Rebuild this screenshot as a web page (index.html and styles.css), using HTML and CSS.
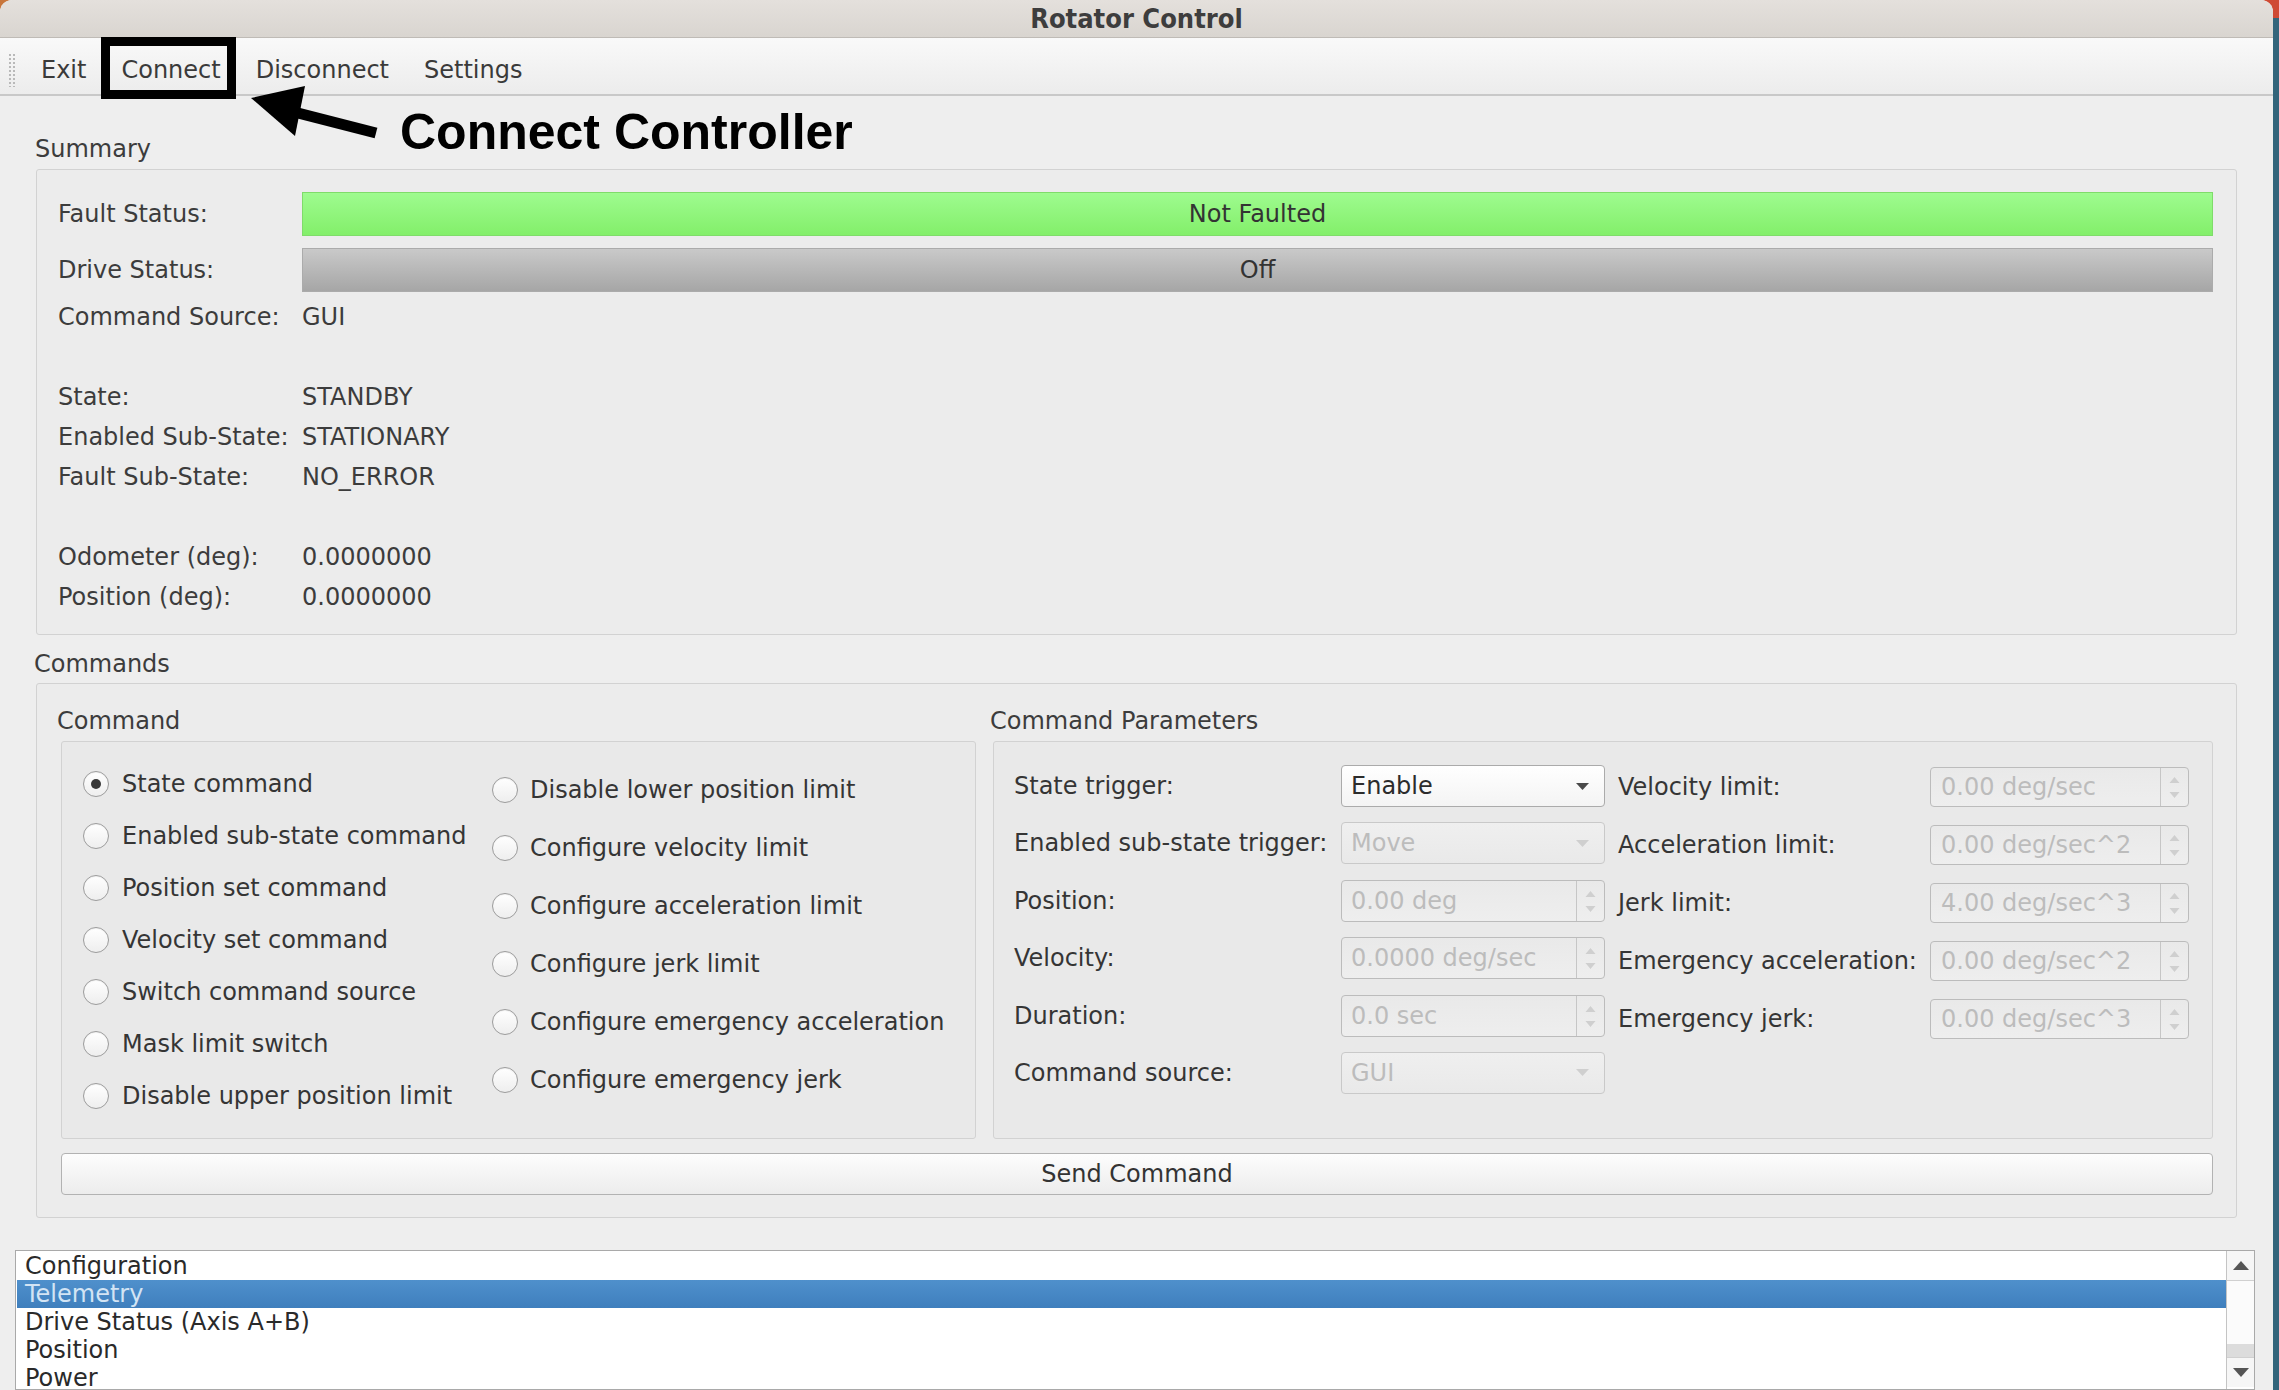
FILE: index.html
```html
<!DOCTYPE html>
<html>
<head>
<meta charset="utf-8">
<title>Rotator Control</title>
<link rel="stylesheet" href="styles.css">
</head>
<body>
<div class="window">
  <div class="titlebar">Rotator Control</div>
  <div class="menubar">
    <span class="grip"></span>
    <span class="menu-item">Exit</span>
    <span class="menu-item">Connect</span>
    <span class="menu-item">Disconnect</span>
    <span class="menu-item">Settings</span>
  </div>

  <div class="groups">
    <div class="group-title summary-title">Summary</div>
    <div class="frame summary">
      <div class="srow bar-row"><span>Fault Status:</span><div class="bar green">Not Faulted</div></div>
      <div class="srow bar-row drive"><span>Drive Status:</span><div class="bar gray">Off</div></div>
      <div class="srow"><span>Command Source:</span><span>GUI</span></div>
      <div class="srow"></div>
      <div class="srow"><span>State:</span><span>STANDBY</span></div>
      <div class="srow"><span>Enabled Sub-State:</span><span>STATIONARY</span></div>
      <div class="srow"><span>Fault Sub-State:</span><span>NO_ERROR</span></div>
      <div class="srow"></div>
      <div class="srow"><span>Odometer (deg):</span><span>0.0000000</span></div>
      <div class="srow"><span>Position (deg):</span><span>0.0000000</span></div>
    </div>

    <div class="group-title commands-title">Commands</div>
    <div class="frame commands">
      <div class="cmd-top">
        <div class="cmd-group">
          <div class="group-title sub-title">Command</div>
          <div class="frame inner radios">
            <div class="radio-col left">
              <div class="radio"><span class="radio-dot checked"></span>State command</div>
              <div class="radio"><span class="radio-dot"></span>Enabled sub-state command</div>
              <div class="radio"><span class="radio-dot"></span>Position set command</div>
              <div class="radio"><span class="radio-dot"></span>Velocity set command</div>
              <div class="radio"><span class="radio-dot"></span>Switch command source</div>
              <div class="radio"><span class="radio-dot"></span>Mask limit switch</div>
              <div class="radio"><span class="radio-dot"></span>Disable upper position limit</div>
            </div>
            <div class="radio-col right">
              <div class="radio"><span class="radio-dot"></span>Disable lower position limit</div>
              <div class="radio"><span class="radio-dot"></span>Configure velocity limit</div>
              <div class="radio"><span class="radio-dot"></span>Configure acceleration limit</div>
              <div class="radio"><span class="radio-dot"></span>Configure jerk limit</div>
              <div class="radio"><span class="radio-dot"></span>Configure emergency acceleration</div>
              <div class="radio"><span class="radio-dot"></span>Configure emergency jerk</div>
            </div>
          </div>
        </div>

        <div class="params-group">
          <div class="group-title sub-title params-title">Command Parameters</div>
          <div class="frame inner params">
            <div class="pcol pleft">
              <div class="prow"><span>State trigger:</span>
                <div class="combo enabled"><span>Enable</span><svg class="caret" width="13" height="7" viewBox="0 0 13 7"><path d="M0 0H13L6.5 7Z" fill="#4a4a4a"/></svg></div></div>
              <div class="prow"><span>Enabled sub-state trigger:</span>
                <div class="combo disabled"><span>Move</span><svg class="caret" width="13" height="7" viewBox="0 0 13 7"><path d="M0 0H13L6.5 7Z" fill="#cfcfcf"/></svg></div></div>
              <div class="prow"><span>Position:</span>
                <div class="spin"><span class="spin-text">0.00 deg</span><span class="spin-btns"><svg width="27" height="40" viewBox="0 0 27 40"><path d="M8.5 16L13.5 10L18.5 16Z M8.5 25L18.5 25L13.5 31Z" fill="#cfcfcf"/></svg></span></div></div>
              <div class="prow"><span>Velocity:</span>
                <div class="spin"><span class="spin-text">0.0000 deg/sec</span><span class="spin-btns"><svg width="27" height="40" viewBox="0 0 27 40"><path d="M8.5 16L13.5 10L18.5 16Z M8.5 25L18.5 25L13.5 31Z" fill="#cfcfcf"/></svg></span></div></div>
              <div class="prow"><span>Duration:</span>
                <div class="spin"><span class="spin-text">0.0 sec</span><span class="spin-btns"><svg width="27" height="40" viewBox="0 0 27 40"><path d="M8.5 16L13.5 10L18.5 16Z M8.5 25L18.5 25L13.5 31Z" fill="#cfcfcf"/></svg></span></div></div>
              <div class="prow"><span>Command source:</span>
                <div class="combo disabled"><span>GUI</span><svg class="caret" width="13" height="7" viewBox="0 0 13 7"><path d="M0 0H13L6.5 7Z" fill="#cfcfcf"/></svg></div></div>
            </div>
            <div class="pcol pright">
              <div class="prow r"><span>Velocity limit:</span>
                <div class="spin"><span class="spin-text">0.00 deg/sec</span><span class="spin-btns"><svg width="27" height="38" viewBox="0 0 27 38"><path d="M8.5 15L13.5 9L18.5 15Z M8.5 24L18.5 24L13.5 30Z" fill="#cfcfcf"/></svg></span></div></div>
              <div class="prow r"><span>Acceleration limit:</span>
                <div class="spin"><span class="spin-text">0.00 deg/sec^2</span><span class="spin-btns"><svg width="27" height="38" viewBox="0 0 27 38"><path d="M8.5 15L13.5 9L18.5 15Z M8.5 24L18.5 24L13.5 30Z" fill="#cfcfcf"/></svg></span></div></div>
              <div class="prow r"><span>Jerk limit:</span>
                <div class="spin"><span class="spin-text">4.00 deg/sec^3</span><span class="spin-btns"><svg width="27" height="38" viewBox="0 0 27 38"><path d="M8.5 15L13.5 9L18.5 15Z M8.5 24L18.5 24L13.5 30Z" fill="#cfcfcf"/></svg></span></div></div>
              <div class="prow r"><span>Emergency acceleration:</span>
                <div class="spin"><span class="spin-text">0.00 deg/sec^2</span><span class="spin-btns"><svg width="27" height="38" viewBox="0 0 27 38"><path d="M8.5 15L13.5 9L18.5 15Z M8.5 24L18.5 24L13.5 30Z" fill="#cfcfcf"/></svg></span></div></div>
              <div class="prow r"><span>Emergency jerk:</span>
                <div class="spin"><span class="spin-text">0.00 deg/sec^3</span><span class="spin-btns"><svg width="27" height="38" viewBox="0 0 27 38"><path d="M8.5 15L13.5 9L18.5 15Z M8.5 24L18.5 24L13.5 30Z" fill="#cfcfcf"/></svg></span></div></div>
            </div>
          </div>
        </div>
      </div>
      <button class="send">Send Command</button>
    </div>
  </div>

  <div class="list">
    <div class="list-items">
      <div class="li">Configuration</div>
      <div class="li sel">Telemetry</div>
      <div class="li">Drive Status (Axis A+B)</div>
      <div class="li">Position</div>
      <div class="li">Power</div>
    </div>
    <div class="scrollbar">
      <div class="sb-btn"><svg width="16" height="9" viewBox="0 0 16 9"><path d="M0 9L8 0L16 9Z" fill="#555"/></svg></div>
      <div class="sb-handle"></div>
      <div class="sb-trough"></div>
      <div class="sb-btn down"><svg width="16" height="9" viewBox="0 0 16 9"><path d="M0 0L16 0L8 9Z" fill="#555"/></svg></div>
    </div>
  </div>

  <div class="callout-box"></div>
  <svg class="callout-arrow" width="140" height="60" viewBox="0 0 140 60">
    <path d="M44 26L126 47" stroke="#000" stroke-width="11" fill="none"/>
    <path d="M1 12L55 0L45 50Z" fill="#000"/>
  </svg>
  <div class="callout-text">Connect Controller</div>
</div>
</body>
</html>
```

FILE: styles.css
```css
* { box-sizing: border-box; }

html, body { margin: 0; padding: 0; }

body {
  width: 2279px;
  height: 1390px;
  overflow: hidden;
  background:
    linear-gradient(#cf4a34, #cf4a34) right top / 24px 18px no-repeat,
    linear-gradient(#c8763c, #c8763c) left top / 20px 18px no-repeat,
    #33657b;
  font-family: "DejaVu Sans", sans-serif;
  font-size: 24px;
  color: #3c3c3c;
}

.window {
  position: relative;
  width: 2273px;
  height: 1390px;
  background: #eeeeee;
  border-radius: 12px 12px 0 0;
  overflow: hidden;
}

.titlebar {
  height: 38px;
  background: linear-gradient(#e4e0dc, #d9d5d0);
  border-bottom: 1px solid #bfbbb6;
  text-align: center;
  font-family: "DejaVu Sans Condensed", "DejaVu Sans", sans-serif;
  font-stretch: condensed;
  font-weight: bold;
  font-size: 27px;
  line-height: 38px;
  color: #3d3d3d;
}

.menubar {
  height: 58px;
  display: flex;
  align-items: center;
  padding: 8px 0 0 8px;
  background: linear-gradient(#f9f9f9, #ececec);
  border-bottom: 2px solid #c8c8c8;
  color: #3a3a3a;
}

.grip {
  width: 8px;
  height: 34px;
  margin-right: 8px;
  background-image: radial-gradient(circle, #b9b9b9 1px, transparent 1.4px);
  background-size: 4px 4px;
}

.menu-item {
  padding: 0 17px;
  line-height: 28px;
}

.menu-item + .menu-item { margin-left: 1px; }

.groups {
  padding: 0 36px;
}

.group-title {
  height: 28px;
  line-height: 28px;
  white-space: nowrap;
}

.summary-title { margin: 39px 0 6px -1px; }

.frame {
  border: 1px solid #d2d2d2;
  border-radius: 3px;
}

.summary {
  padding: 22px 23px 17px 21px;
  background: #ececec;
}

.srow {
  display: grid;
  grid-template-columns: 244px 1fr;
  height: 40px;
  align-items: center;
  white-space: nowrap;
}

.bar-row { height: 44px; }
.bar-row + .bar-row { margin-top: 12px; }
.drive { margin-bottom: 5px; }

.bar {
  height: 44px;
  display: flex;
  align-items: center;
  justify-content: center;
  color: #333;
}

.green {
  background: linear-gradient(#9efb8f, #83ef6a);
  border: 1px solid #7fdc6a;
}

.gray {
  background: linear-gradient(#c9c9c9, #a6a6a6);
  border: 1px solid #ababab;
}

.commands-title { margin: 15px 0 5px -2px; }

.commands {
  padding: 23px 23px 22px 24px;
  background: #ececec;
}

.cmd-top {
  display: flex;
  gap: 17px;
}

.cmd-group { width: 915px; }
.params-group { width: 1220px; }

.sub-title { margin: 0 0 6px -4px; }
.params-title { margin-left: -3px; }

.inner {
  height: 398px;
  background: #e9e9e9;
}

.radios {
  display: flex;
  padding-left: 21px;
}

.radio-col {
  display: flex;
  flex-direction: column;
}

.radio-col.left { width: 409px; padding-top: 16px; }
.radio-col.left .radio { height: 52px; }
.radio-col.right { padding-top: 19px; }
.radio-col.right .radio { height: 58px; }

.radio {
  display: flex;
  align-items: center;
  white-space: nowrap;
  color: #353535;
}

.radio-dot {
  flex: none;
  width: 26px;
  height: 26px;
  margin-right: 13px;
  border-radius: 50%;
  border: 1px solid #9c9c9c;
  background: linear-gradient(#ffffff, #eeeeee);
  box-shadow: inset 0 1px 1px rgba(0, 0, 0, 0.06);
  display: flex;
  align-items: center;
  justify-content: center;
}

.radio-col.right .radio-dot { margin-right: 12px; }

.radio-dot.checked::after {
  content: "";
  width: 10px;
  height: 10px;
  border-radius: 50%;
  background: #383838;
}

.params {
  display: flex;
  gap: 13px;
  padding-left: 20px;
}

.pcol {
  display: flex;
  flex-direction: column;
}

.pleft { padding-top: 23px; gap: 15.4px; }
.pright { padding-top: 25px; gap: 18px; }

.prow {
  display: grid;
  grid-template-columns: 327px 264px;
  height: 42px;
  align-items: center;
  white-space: nowrap;
  color: #353535;
}

.prow.r {
  grid-template-columns: 312px 259px;
  height: 40px;
}

.combo {
  height: 100%;
  display: flex;
  align-items: center;
  padding: 0 15px 0 9px;
  border-radius: 4px;
}

.combo .caret { margin-left: auto; }

.combo.enabled {
  background: linear-gradient(#ffffff, #f4f4f4);
  border: 1px solid #ababab;
  color: #2c2c2c;
}

.combo.disabled {
  background: linear-gradient(#efefef, #e9e9e9);
  border: 1px solid #c9c9c9;
  color: #bcbcbc;
}

.spin {
  height: 100%;
  display: flex;
  border: 1px solid #bcbcbc;
  border-radius: 4px;
  background: linear-gradient(#e9e9e9, #eeeeee);
  color: #bcbcbc;
}

.spin-text {
  flex: 1;
  display: flex;
  align-items: center;
  padding-left: 9px;
}

.prow.r .spin-text { padding-left: 10px; }

.spin-btns {
  width: 28px;
  border-left: 1px solid #c6c6c6;
  display: flex;
}

.send {
  display: block;
  width: 100%;
  height: 42px;
  margin-top: 14px;
  border: 1px solid #b2b2b2;
  border-radius: 4px;
  background: linear-gradient(#fdfdfd, #ececec);
  font: inherit;
  color: #333;
  padding: 0;
}

.list {
  display: flex;
  width: 2240px;
  height: 140px;
  margin: 32px 0 0 15px;
  background: #ffffff;
  border: 1px solid #a9a9a9;
  overflow: hidden;
}

.list-items {
  flex: 1;
  padding: 1px 0 0 1px;
}

.li {
  height: 28px;
  line-height: 28px;
  padding-left: 8px;
  color: #2a2a2a;
  white-space: nowrap;
}

.li.sel {
  background: linear-gradient(#4f90cc, #3f7fbd);
  color: #d3e4f4;
}

.scrollbar {
  width: 28px;
  display: flex;
  flex-direction: column;
  border-left: 1px solid #c4c4c4;
  background: #ffffff;
}

.sb-btn {
  height: 30px;
  display: flex;
  align-items: center;
  justify-content: center;
  border-bottom: 1px solid #d0d0d0;
  background: #f6f6f6;
}

.sb-btn.down {
  border-bottom: none;
  border-top: 1px solid #d0d0d0;
}

.sb-handle {
  height: 63px;
  background: #fbfbfb;
}

.sb-trough {
  height: 13px;
  background: #dcdcdc;
}

.callout-box {
  position: absolute;
  left: 101px;
  top: 37px;
  width: 135px;
  height: 62px;
  border: 9px solid #000;
}

.callout-arrow {
  position: absolute;
  left: 250px;
  top: 86px;
}

.callout-text {
  position: absolute;
  left: 400px;
  top: 107px;
  font-family: "Liberation Sans", Arial, sans-serif;
  font-weight: bold;
  font-size: 50px;
  line-height: 50px;
  color: #000;
  white-space: nowrap;
}
```
